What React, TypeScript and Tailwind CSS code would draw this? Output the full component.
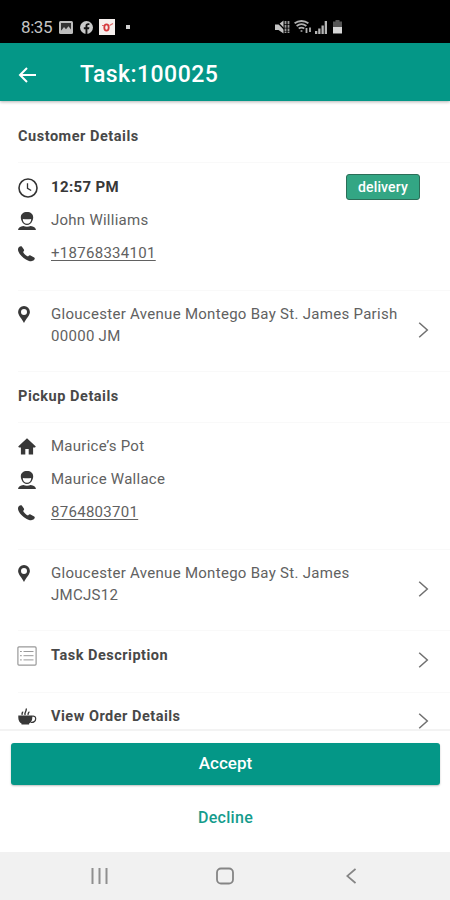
import React from 'react';

interface IconProps {
  className?: string;
}

const ClockIcon: React.FC<IconProps> = ({ className }) => (
  <svg className={className} width="20" height="20" viewBox="0 0 20 20" fill="none" stroke="#333" strokeWidth="1.6">
    <circle cx="10" cy="10" r="9" />
    <path d="M9.500 5.300V10.300l3.700 2.200" strokeWidth="1.300" />
  </svg>
);

const PersonIcon: React.FC<IconProps> = ({ className }) => (
  <svg className={className} width="18" height="18" viewBox="0 0 18 18" fill="#383838">
    <path
      fillRule="evenodd"
      d="M9 0C5.300 0 2.800 2 2.800 5.400c0 1.300.3 2.400.8 3.300.8 2.400 2.900 4.200 5.400 4.200s4.600-1.800 5.400-4.200c.5-.9.8-2 .8-3.300C15.200 2 12.700 0 9 0ZM4.800 6.900c2.500.5 5.900.5 8.400 0 0 2.800-1.700 4.800-4.200 4.800S4.800 9.700 4.800 6.900Z"
    />
    <path d="M0 18c.2-2.400 2.300-3.400 5.400-4 2 1 5.200 1 7.200 0 3.100.6 5.200 1.600 5.400 4Z" />
  </svg>
);

const PhoneIcon: React.FC<IconProps> = ({ className }) => (
  <svg className={className} width="17" height="16" viewBox="0 0 17 16" fill="#383838">
    <path d="M.8 1.200C1.800.3 3.100-.2 3.800.6l2.100 3c.5.8.2 1.600-.8 2.400.9 1.900 2.700 3.500 4.900 4.500 1-1.100 1.700-1.500 2.500-1.100l3.700 2.100c.9.6.7 1.700-.2 2.600-1.100 1.200-3.100 1.600-5.600.6C6 12.900 1.800 9.300.3 5.200-.2 3.600-.1 2.200.8 1.200Z" />
  </svg>
);

const PinIcon: React.FC<IconProps> = ({ className }) => (
  <svg className={className} width="12" height="17" viewBox="0 0 12 17" fill="#383838">
    <path
      fillRule="evenodd"
      d="M6 0a5.900 5.900 0 0 0-5.900 5.900C.1 9.500 4 12.500 6 17c2-4.500 5.900-7.500 5.900-11.100A5.900 5.900 0 0 0 6 0Zm0 2.900a3 3 0 1 1 0 6 3 3 0 0 1 0-6Z"
    />
  </svg>
);

const HomeIcon: React.FC<IconProps> = ({ className }) => (
  <svg className={className} width="18" height="17" viewBox="0 0 18 17" fill="#383838">
    <path d="M9 .3 17.800 8.600l-.8.900h-1.900V16.500h-4.400v-5.600H7.300v5.600H2.900V9.500H1L.2 8.600Z" />
  </svg>
);

const ListIcon: React.FC<IconProps> = ({ className }) => (
  <svg className={className} width="20" height="20" viewBox="0 0 20 20" fill="none" stroke="#999">
    <rect x=".9" y=".9" width="18.200" height="18.200" rx="1" strokeWidth="1.200" />
    <path d="M6.500 5.500h10M6.500 9.700h10M6.500 13.900h10" />
    <path d="M3 5.500h1.800M3 9.700h1.800M3 13.900h1.800" />
  </svg>
);

const CupIcon: React.FC<IconProps> = ({ className }) => (
  <svg className={className} width="19" height="17" viewBox="0 0 19 17">
    <path d="M.3 7.500h14v2.200c0 3-1.600 5-3.200 5.700v1.100H3.500v-1.100C1.900 14.700.3 12.700.3 9.700Z" fill="#383838" />
    <path d="M14 8.300c2-.6 3.800.2 3.700 2.300-.1 2.500-2 4-5 3.900" fill="none" stroke="#383838" strokeWidth="1.200" />
    <path d="M4.300 6.900c-.9-1.700.6-2 .3-3.300M7.300 6.900c-1.600-2.500 1.700-3.300.9-6.400M10.300 6.900c-1-1.700.9-2 .6-3.300" fill="none" stroke="#383838" strokeWidth="1.400" />
  </svg>
);

const Chevron: React.FC<IconProps> = ({ className }) => (
  <svg className={className} width="11" height="16" viewBox="0 0 11 16" fill="none" stroke="#707070" strokeWidth="1.500">
    <path d="M1.200 .8 9.300 8l-8.100 7.200" />
  </svg>
);

const StatusBar = () => (
  <div className="flex h-[43px] shrink-0 items-center bg-black pt-[11px] pl-[21px] text-[#c4c4c4]">
    <span className="w-[38px] text-[17px] leading-4 tracking-[-0.4px]">8:35</span>
    <svg width="14" height="13" viewBox="0 0 14 13">
      <rect width="14" height="13" rx="1.500" fill="#bdbdbd" />
      <rect x="2" y="2" width="10" height="7.500" fill="#333" />
      <path d="m2 10 3-4 2 2.300 2.500-3L12 8.500V10Z" fill="#bdbdbd" />
    </svg>
    <svg className="ml-[7px]" width="13" height="13" viewBox="0 0 13 13">
      <circle cx="6.500" cy="6.500" r="6.500" fill="#c8c8c8" />
      <path d="M5.500 13V8.300H3.800v-2h1.700V5c0-1.800 1-2.800 2.600-2.800h1.300V4H8.300c-.7 0-.9.4-.9 1v1.300h2L9 8.300H7.400V13Z" fill="#111" />
    </svg>
    <svg className="ml-[6px]" width="16" height="16" viewBox="0 0 16 16">
      <rect width="16" height="16" fill="#f6efed" />
      <ellipse cx="7.500" cy="8.500" rx="2.200" ry="3.200" fill="none" stroke="#d5383c" strokeWidth="1.800" />
      <path d="M3 6.500h2M10.500 6.500 14 4.500" stroke="#dc6a6a" strokeWidth="1.200" />
    </svg>
    <span className="ml-[11px] size-1 bg-[#d0d0d0]" />
    <svg className="ml-[145px]" width="15" height="14" viewBox="0 0 15 14">
      <path d="M0 4.500h3.500L8.500 .5v13L3.500 10H0Z" fill="#c4c4c4" />
      <path d="M1 .8 13 13" stroke="#000" strokeWidth="1.300" />
      <path d="M10.500 1v12M13.500 1v12" stroke="#999" strokeWidth="1.800" strokeDasharray="3 .7" />
    </svg>
    <svg className="ml-[4px]" width="18" height="14" viewBox="0 0 18 14" fill="none" stroke="#b0b0b0" strokeWidth="1.800">
      <path d="M.6 3.300c4-3.100 9.800-3.100 13.800 0M2.600 5.900c3-2.100 6.800-2.100 9.800 0M4.700 8.500c1.800-1.200 3.800-1.200 5.600 0M7.500 10.200v1.500" />
      <path d="M12.500 8v5M16 7.500v4.500" />
    </svg>
    <svg className="ml-[3px]" width="12" height="13" viewBox="0 0 12 13" fill="#b5b5b5">
      <path d="M0 10h2.300v3H0ZM3.200 7.500h2.300V13H3.200ZM6.500 4.500h2.300V13H6.500ZM9.700 0H12v13H9.700Z" />
    </svg>
    <svg className="ml-[6px]" width="9" height="14" viewBox="0 0 9 14">
      <path d="M2.500 0h4v1.500H9V7H0V1.500h2.500Z" fill="#555" />
      <path d="M0 7h9v6.500H0Z" fill="#d6d6d6" />
    </svg>
  </div>
);

const Divider = () => <div className="ml-[18px] h-px shrink-0 bg-[#f9f9f9]" />;

interface RowProps {
  icon: React.ReactNode;
  children: React.ReactNode;
}

const DetailRow: React.FC<RowProps> = ({ icon, children }) => (
  <div className="flex h-[33px] items-center">
    <div className="w-[33px] shrink-0">{icon}</div>
    {children}
  </div>
);

interface AddressProps {
  street: string;
  area: string;
}

const Address: React.FC<AddressProps> = ({ street, area }) => (
  <div className="flex h-20 shrink-0 pt-[12px] pl-[18px]">
    <PinIcon className="mt-[3px] mr-[21px] shrink-0" />
    <div className="flex-1 text-[15px] leading-[22px] tracking-[0.29px] whitespace-nowrap text-[#616161]">
      <p>{street}</p>
      <p>{area}</p>
    </div>
    <Chevron className="mt-[19px] mr-[21px] shrink-0" />
  </div>
);

const SectionTitle: React.FC<{ children: React.ReactNode }> = ({ children }) => (
  <h2 className="flex h-[50px] shrink-0 items-center pl-[18px] text-[14.500px] font-bold tracking-[0.530px] text-[#484848]">
    {children}
  </h2>
);

export default function App() {
  return (
    <div className="flex h-[900px] w-[450px] flex-col overflow-hidden bg-white font-['Roboto',sans-serif]">
      <StatusBar />
      <header className="z-10 flex h-[58px] shrink-0 items-center bg-[#049787] pt-[6px] pl-[18px] text-white shadow-[0_1px_3px_rgba(0,0,0,0.3)]">
        <svg width="18" height="16" viewBox="0 0 18 16" fill="none" stroke="white" strokeWidth="2">
          <path d="M18 8H2M9 1 2 8l7 7" />
        </svg>
        <h1 className="ml-[44px] text-[23px] leading-7 font-medium tracking-[0.45px]">Task:100025</h1>
      </header>

      <main className="flex h-[628px] shrink-0 flex-col overflow-hidden pt-[11px]">
        <SectionTitle>Customer Details</SectionTitle>
        <Divider />
        <section className="flex h-[127px] shrink-0 justify-between pt-2 pr-[30px] pl-[18px] text-[15px] text-[#616161]">
          <div>
            <DetailRow icon={<ClockIcon />}>
              <span className="font-bold tracking-[0.35px] text-[#383838]">12:57 PM</span>
            </DetailRow>
            <DetailRow icon={<PersonIcon />}>
              <span className="tracking-[0.26px]">John Williams</span>
            </DetailRow>
            <DetailRow icon={<PhoneIcon />}>
              <span className="tracking-[0.29px] underline underline-offset-2">+18768334101</span>
            </DetailRow>
          </div>
          <span className="mt-[3px] flex h-[26px] w-[74px] items-center justify-center rounded-[3px] border border-[#2c6e58] bg-[#33a684] text-[14px] font-medium tracking-[0.15px] text-white">
            delivery
          </span>
        </section>
        <Divider />
        <Address street="Gloucester Avenue Montego Bay St. James Parish" area="00000 JM" />
        <Divider />

        <SectionTitle>Pickup Details</SectionTitle>
        <Divider />
        <section className="flex h-[126px] shrink-0 flex-col pt-[7px] pl-[18px] text-[15px] text-[#616161]">
          <DetailRow icon={<HomeIcon />}>
            <span className="tracking-[0.26px]">Maurice’s Pot</span>
          </DetailRow>
          <DetailRow icon={<PersonIcon />}>
            <span className="tracking-[0.26px]">Maurice Wallace</span>
          </DetailRow>
          <DetailRow icon={<PhoneIcon />}>
            <span className="tracking-[0.29px] underline underline-offset-2">8764803701</span>
          </DetailRow>
        </section>
        <Divider />
        <Address street="Gloucester Avenue Montego Bay St. James" area="JMCJS12" />
        <Divider />

        <div className="flex h-[61px] shrink-0 pt-[15px] pr-[21px] pl-[17px]">
          <ListIcon className="mr-[14px]" />
          <span className="flex-1 text-[14.500px] leading-5 font-bold tracking-[0.5px] text-[#484848]">Task Description</span>
          <Chevron className="mt-[6px]" />
        </div>
        <Divider />
        <div className="flex h-[61px] shrink-0 pt-[14px] pr-[21px] pl-[18px]">
          <CupIcon className="mt-px mr-[14px]" />
          <span className="flex-1 text-[14.500px] leading-5 font-bold tracking-[0.5px] text-[#484848]">View Order Details</span>
          <Chevron className="mt-[6px]" />
        </div>
      </main>

      <footer className="flex flex-1 flex-col border-t-2 border-[#f3f3f3] pt-3 pr-[10px] pl-[11px]">
        <button className="h-[42px] rounded-[3px] bg-[#049787] text-[17px] font-medium text-white shadow-[0_1px_2px_rgba(0,0,0,0.25)]">
          Accept
        </button>
        <button className="mt-[19px] h-7 text-[16px] font-medium tracking-[0.3px] text-[#159c8c]">Decline</button>
      </footer>

      <nav className="flex h-12 shrink-0 items-center bg-[#f1f1f1] pl-[91px]">
        <svg className="-mt-px" width="17" height="16" viewBox="0 0 17 16" stroke="#8f8f8f" strokeWidth="2">
          <path d="M1.500 0v16M8.500 0v16M15.500 0v16" />
        </svg>
        <svg className="-mt-px ml-[108px]" width="18" height="18" viewBox="0 0 18 18" fill="none" stroke="#858585" strokeWidth="1.800">
          <rect x="1" y="1.500" width="16" height="15" rx="4" />
        </svg>
        <svg className="-mt-px ml-[112px]" width="10" height="16" viewBox="0 0 10 16" fill="none" stroke="#858585" strokeWidth="1.700">
          <path d="M9.500 1 1.200 8l8.300 7" />
        </svg>
      </nav>
    </div>
  );
}
